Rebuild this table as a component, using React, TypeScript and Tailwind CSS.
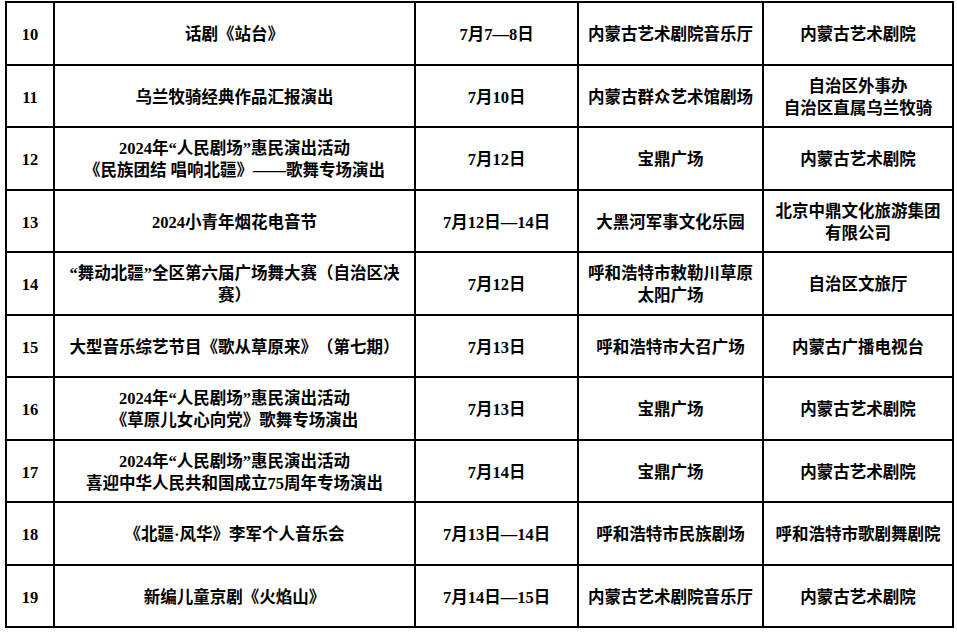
import React from 'react';

const rows: [string, React.ReactNode, string, React.ReactNode, React.ReactNode][] = [
  ['10', '话剧《站台》', '7月7—8日', '内蒙古艺术剧院音乐厅', '内蒙古艺术剧院'],
  ['11', '乌兰牧骑经典作品汇报演出', '7月10日', '内蒙古群众艺术馆剧场', <>自治区外事办<br />自治区直属乌兰牧骑</>],
  ['12', <>2024年“人民剧场”惠民演出活动<br />《民族团结 唱响北疆》——歌舞专场演出</>, '7月12日', '宝鼎广场', '内蒙古艺术剧院'],
  ['13', '2024小青年烟花电音节', '7月12日—14日', '大黑河军事文化乐园', <>北京中鼎文化旅游集团<br />有限公司</>],
  ['14', <>“舞动北疆”全区第六届广场舞大赛（自治区决<br />赛）</>, '7月12日', <>呼和浩特市敕勒川草原<br />太阳广场</>, '自治区文旅厅'],
  ['15', '大型音乐综艺节目《歌从草原来》（第七期）', '7月13日', '呼和浩特市大召广场', '内蒙古广播电视台'],
  ['16', <>2024年“人民剧场”惠民演出活动<br />《草原儿女心向党》歌舞专场演出</>, '7月13日', '宝鼎广场', '内蒙古艺术剧院'],
  ['17', <>2024年“人民剧场”惠民演出活动<br />喜迎中华人民共和国成立75周年专场演出</>, '7月14日', '宝鼎广场', '内蒙古艺术剧院'],
  ['18', '《北疆·风华》李军个人音乐会', '7月13日—14日', '呼和浩特市民族剧场', '呼和浩特市歌剧舞剧院'],
  ['19', '新编儿童京剧《火焰山》', '7月14日—15日', '内蒙古艺术剧院音乐厅', '内蒙古艺术剧院'],
];

export default function App() {
  return (
    <div className="w-[957px] h-[632px] bg-white pl-[5px] pt-[1px]">
      <table
        className="border-collapse table-fixed w-[947px] text-[16.5px] font-bold text-black leading-[22px] [text-spacing-trim:space-all]"
        style={{ fontFamily: '"Liberation Serif", "Noto Sans CJK SC", serif' }}
      >
        <colgroup>
          <col className="w-[48px]" />
          <col className="w-[361px]" />
          <col className="w-[163px]" />
          <col className="w-[185px]" />
          <col className="w-[190px]" />
        </colgroup>
        <tbody>
          {rows.map((r) => (
            <tr key={r[0]} className="h-[62.5px]">
              {r.map((c, i) => (
                <td
                  key={i}
                  className="border-2 border-black text-center align-middle whitespace-nowrap px-0 pt-[4px] pb-0"
                >
                  {c}
                </td>
              ))}
            </tr>
          ))}
        </tbody>
      </table>
    </div>
  );
}
